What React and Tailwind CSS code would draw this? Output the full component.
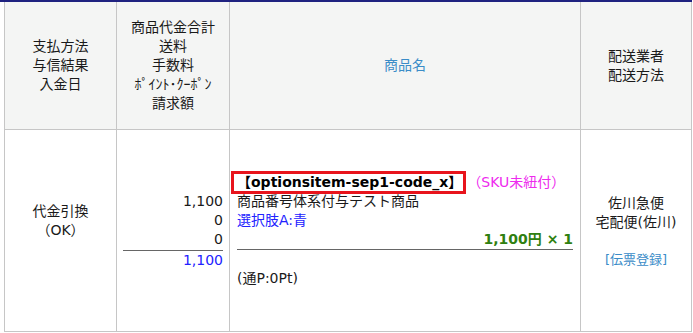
export default function App() {
  return (
    <div className="w-[693px] h-[333px] bg-white font-['DejaVu_Sans','Noto_Sans_CJK_JP',sans-serif] text-[14px] leading-[19px] text-[#1a1a1a]">
      <div className="h-[2px] w-[692px] bg-[#1f2280]" />
      <div className="ml-[4px] w-[688px] grid grid-cols-[111px_112px_350px_110px] grid-rows-[127px_201px] gap-px bg-[#c6c6c6] border-l border-r border-b border-[#c6c6c6]">
        {/* header */}
        <div className="bg-[#f4f5f4] flex flex-col items-center justify-center text-center">
          <div>支払方法</div>
          <div>与信結果</div>
          <div>入金日</div>
        </div>
        <div className="bg-[#f4f5f4] flex flex-col items-center justify-center text-center">
          <div>商品代金合計</div>
          <div>送料</div>
          <div>手数料</div>
          <div>ﾎﾟｲﾝﾄ･ｸｰﾎﾟﾝ</div>
          <div>請求額</div>
        </div>
        <div className="bg-[#f4f5f4] flex items-center justify-center text-[#3a8cc8]">商品名</div>
        <div className="bg-[#f4f5f4] flex flex-col items-center justify-center text-center">
          <div>配送業者</div>
          <div>配送方法</div>
        </div>

        {/* body */}
        <div className="bg-white flex flex-col items-center justify-center text-center">
          <div>代金引換</div>
          <div>（OK）</div>
          <div>&nbsp;</div>
        </div>
        <div className="bg-white flex flex-col justify-center px-[6px] text-right">
          <div>1,100</div>
          <div>0</div>
          <div>0</div>
          <div className="mt-[1px] border-t border-[#666666]" />
          <div className="text-[#2222ff]">1,100</div>
        </div>
        <div className="bg-white flex flex-col justify-center px-[7px]">
          <div className="h-[19px] flex items-center">
            <span className="-ml-[6px] h-[23px] flex items-center border-[3px] border-[#e8141c] pl-[3px] pr-[1px] font-bold text-black">【optionsitem-sep1-code_x】</span>
            <span className="ml-[1px] text-[#ee2aee]">（SKU未紐付）</span>
          </div>
          <div>商品番号体系付与テスト商品</div>
          <div className="text-[#2222ff]">選択肢A:青</div>
          <div className="text-right font-bold text-[#2f8010]">1,100円 × 1</div>
          <div className="border-t border-[#666666]" />
          <div>&nbsp;</div>
          <div>(通P:0Pt)</div>
        </div>
        <div className="bg-white flex flex-col items-center justify-center text-center">
          <div>佐川急便</div>
          <div>宅配便(佐川)</div>
          <div>&nbsp;</div>
          <div className="text-[13px] leading-[17px] text-[#3a8cc8]">[伝票登録]</div>
        </div>
      </div>
    </div>
  );
}
